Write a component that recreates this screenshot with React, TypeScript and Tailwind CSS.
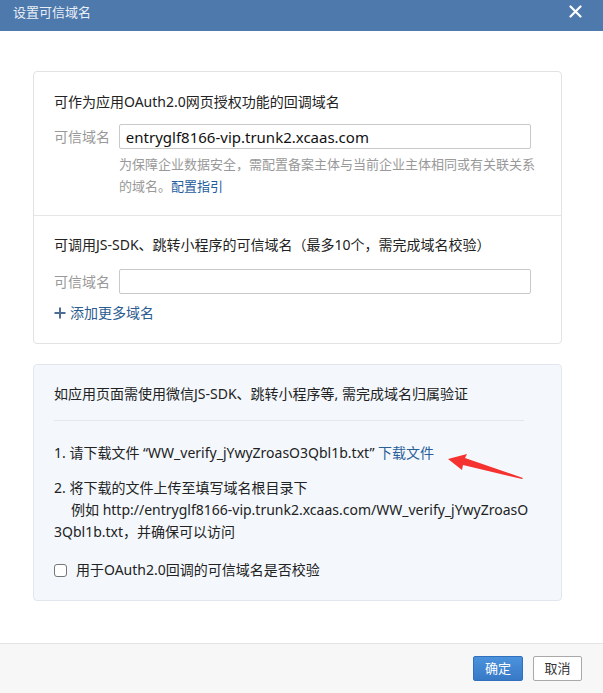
import React, { useState } from 'react';

const font = { fontFamily: '"Noto Sans", "Noto Sans CJK SC", sans-serif' };

const TrustedDomainDialog = () => {
  const [domain, setDomain] = useState('entryglf8166-vip.trunk2.xcaas.com');
  const [extra, setExtra] = useState('');
  const [checked, setChecked] = useState(false);

  return (
    <div className="w-[603px] h-[693px] bg-white flex flex-col text-[14px] text-[#222]" style={font}>
      {/* header */}
      <div className="h-[31px] bg-[#4d79ad] flex items-center justify-between pl-[13px] pr-[21px]">
        <span className="text-[13px] text-[#e9eff6] leading-none -mt-[7px]">设置可信域名</span>
        <svg width="13" height="13" viewBox="0 0 13 13" className="-mt-[8px]">
          <path d="M1.5 1.5 L11.5 11.5 M11.5 1.5 L1.5 11.5" stroke="#fff" strokeWidth="2.2" strokeLinecap="round" />
        </svg>
      </div>

      <div className="flex-1 pt-[40px] pl-[33px]">
        {/* card 1 */}
        <div className="w-[529px] border border-[#e2e2e2] rounded-[4px] bg-white">
          <div className="pl-[20px] pr-[30px] pt-[20px] pb-[18px] border-b border-[#e6e6e6]">
            <div className="leading-[20px]">可作为应用OAuth2.0网页授权功能的回调域名</div>
            <div className="flex items-center mt-[12px]">
              <span className="w-[65px] text-[#999]">可信域名</span>
              <input
                value={domain}
                onChange={e => setDomain(e.target.value)}
                className="w-[413px] h-[25px] border border-[#c9c9c9] rounded-[2px] px-[6px] text-[15px] text-[#111] outline-none"
              />
            </div>
            <div className="ml-[65px] w-[425px] mt-[4px] text-[13px] leading-[22px] text-[#999]">
              为保障企业数据安全，需配置备案主体与当前企业主体相同或有关联关系的域名。
              <span className="text-[#1f5d9e]">配置指引</span>
            </div>
          </div>
          <div className="pl-[20px] pr-[30px] pt-[19px] pb-[20px]">
            <div className="leading-[20px]">可调用JS-SDK、跳转小程序的可信域名（最多10个，需完成域名校验）</div>
            <div className="flex items-center mt-[14px]">
              <span className="w-[65px] text-[#999]">可信域名</span>
              <input
                value={extra}
                onChange={e => setExtra(e.target.value)}
                className="w-[413px] h-[25px] border border-[#c9c9c9] rounded-[2px] px-[6px] text-[15px] outline-none"
              />
            </div>
            <button className="flex items-center gap-[4px] mt-[9px] leading-[20px] text-[#2b5b8f]">
              <svg width="12" height="12" viewBox="0 0 12 12">
                <path d="M6 0.5 V11.5 M0.5 6 H11.5" stroke="#4d6e92" strokeWidth="2" />
              </svg>
              添加更多域名
            </button>
          </div>
        </div>

        {/* card 2 */}
        <div className="w-[529px] mt-[20px] border border-[#e1e6ee] rounded-[4px] bg-[#f4f8fd] pl-[20px] pr-[37px] pt-[19px] pb-[20px] text-[#222] relative">
          <div className="leading-[20px] pb-[16px] border-b border-[#e3e7ec]">
            如应用页面需使用微信JS-SDK、跳转小程序等, 需完成域名归属验证
          </div>
          <div className="mt-[21px] leading-[22px]">
            1. 请下载文件 “WW_verify_jYwyZroasO3Qbl1b.txt” <span className="text-[#2a5f98] cursor-pointer">下载文件</span>
          </div>
          <div className="mt-[13px] leading-[22px]">
            <div>2. 将下载的文件上传至填写域名根目录下</div>
            <div className="pl-[17px] whitespace-nowrap">例如 http://entryglf8166-vip.trunk2.xcaas.com/WW_verify_jYwyZroasO</div>
            <div>3Qbl1b.txt，并确保可以访问</div>
          </div>
          <label className="flex items-center gap-[9px] mt-[17px] leading-[20px] cursor-pointer">
            <span
              onClick={() => setChecked(!checked)}
              className="w-[13px] h-[13px] border border-[#767676] rounded-[3px] bg-white flex items-center justify-center"
            >
              {checked && (
                <svg width="9" height="9" viewBox="0 0 9 9">
                  <path d="M1 4.5 L3.5 7 L8 1.5" stroke="#333" strokeWidth="1.5" fill="none" />
                </svg>
              )}
            </span>
            用于OAuth2.0回调的可信域名是否校验
          </label>

          {/* red annotation arrow */}
          <svg className="absolute left-[413px] top-[89px]" width="80" height="30" viewBox="0 0 80 30">
            <polygon points="1,5 20,0 18,4 76,24 75,25 16,11 15,16" fill="#f5322f" />
          </svg>
        </div>
      </div>

      {/* footer */}
      <div className="h-[50px] border-t border-[#e4e4e4] bg-[#f7f7f7] flex items-start justify-end gap-[10px] pt-[12px] pr-[21px]">
        <button className="w-[50px] h-[25px] rounded-[2px] border border-[#3170bd] bg-gradient-to-b from-[#4b92dc] to-[#3879c6] text-white text-[13px]">
          确定
        </button>
        <button className="w-[49px] h-[25px] rounded-[2px] border border-[#a9a9a9] bg-white text-[#333] text-[13px]">
          取消
        </button>
      </div>
    </div>
  );
};

export default function App() {
  return <TrustedDomainDialog />;
}
